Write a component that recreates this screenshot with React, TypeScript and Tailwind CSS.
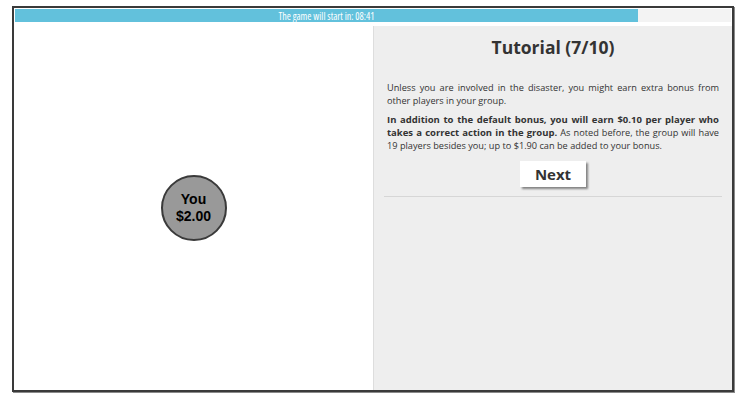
export default function App() {
  return (
    <div className="w-[743px] h-[401px] bg-white pt-[6px] pl-[12px]" style={{ fontFamily: "'Open Sans', sans-serif" }}>
      <div className="w-[722px] h-[386px] border-2 border-[#3a3a3a] shadow-[1px_1px_0_#8a8a8a] flex flex-col">
        <div className="mx-[1px] mt-[1px] h-[13px] bg-[#f3f3f3] flex">
          <div className="w-[623px] h-full bg-[#62c1dc] flex items-center justify-center text-white text-[10px] leading-none font-stretch-[75%]">
            The game will start in: 08:41
          </div>
        </div>
        <div className="flex flex-1 mt-[4px]">
          <div className="w-[359px] shrink-0 flex items-center justify-center">
            <div className="w-[66px] h-[66px] rounded-full bg-[#999999] border-2 border-[#3a3a3a] flex flex-col items-center justify-center text-black font-bold text-[14px] leading-[17px]" style={{ fontFamily: "'Liberation Sans', Arial, sans-serif" }}>
              <span>You</span>
              <span>$2.00</span>
            </div>
          </div>
          <div className="flex-1 min-w-0 bg-[#eeeeee] border-l border-[#dddddd] px-[10px] pt-[9px] text-[#333333]">
            <h2 className="text-center font-bold text-[17.5px] leading-[24px]">Tutorial (7/10)</h2>
            <div className="px-[3px] mt-[22px] text-[9.2px] leading-[13px] text-justify">
              <p>Unless you are involved in the disaster, you might earn extra bonus from other players in your group.</p>
              <p className="mt-[6px]">
                <b className="text-[9.5px]">In addition to the default bonus, you will earn $0.10 per player who takes a correct action in the group.</b> As noted before, the group will have 19 players besides you; up to $1.90 can be added to your bonus.
              </p>
            </div>
            <div className="flex justify-center mt-[9px]">
              <button className="w-[66px] h-[26px] bg-white shadow-[2px_2px_2px_rgba(0,0,0,0.45)] font-bold text-[15px] text-[#333333]">
                Next
              </button>
            </div>
            <hr className="mt-[9px] border-t border-[#d6d6d6]" />
          </div>
        </div>
      </div>
    </div>
  )
}
